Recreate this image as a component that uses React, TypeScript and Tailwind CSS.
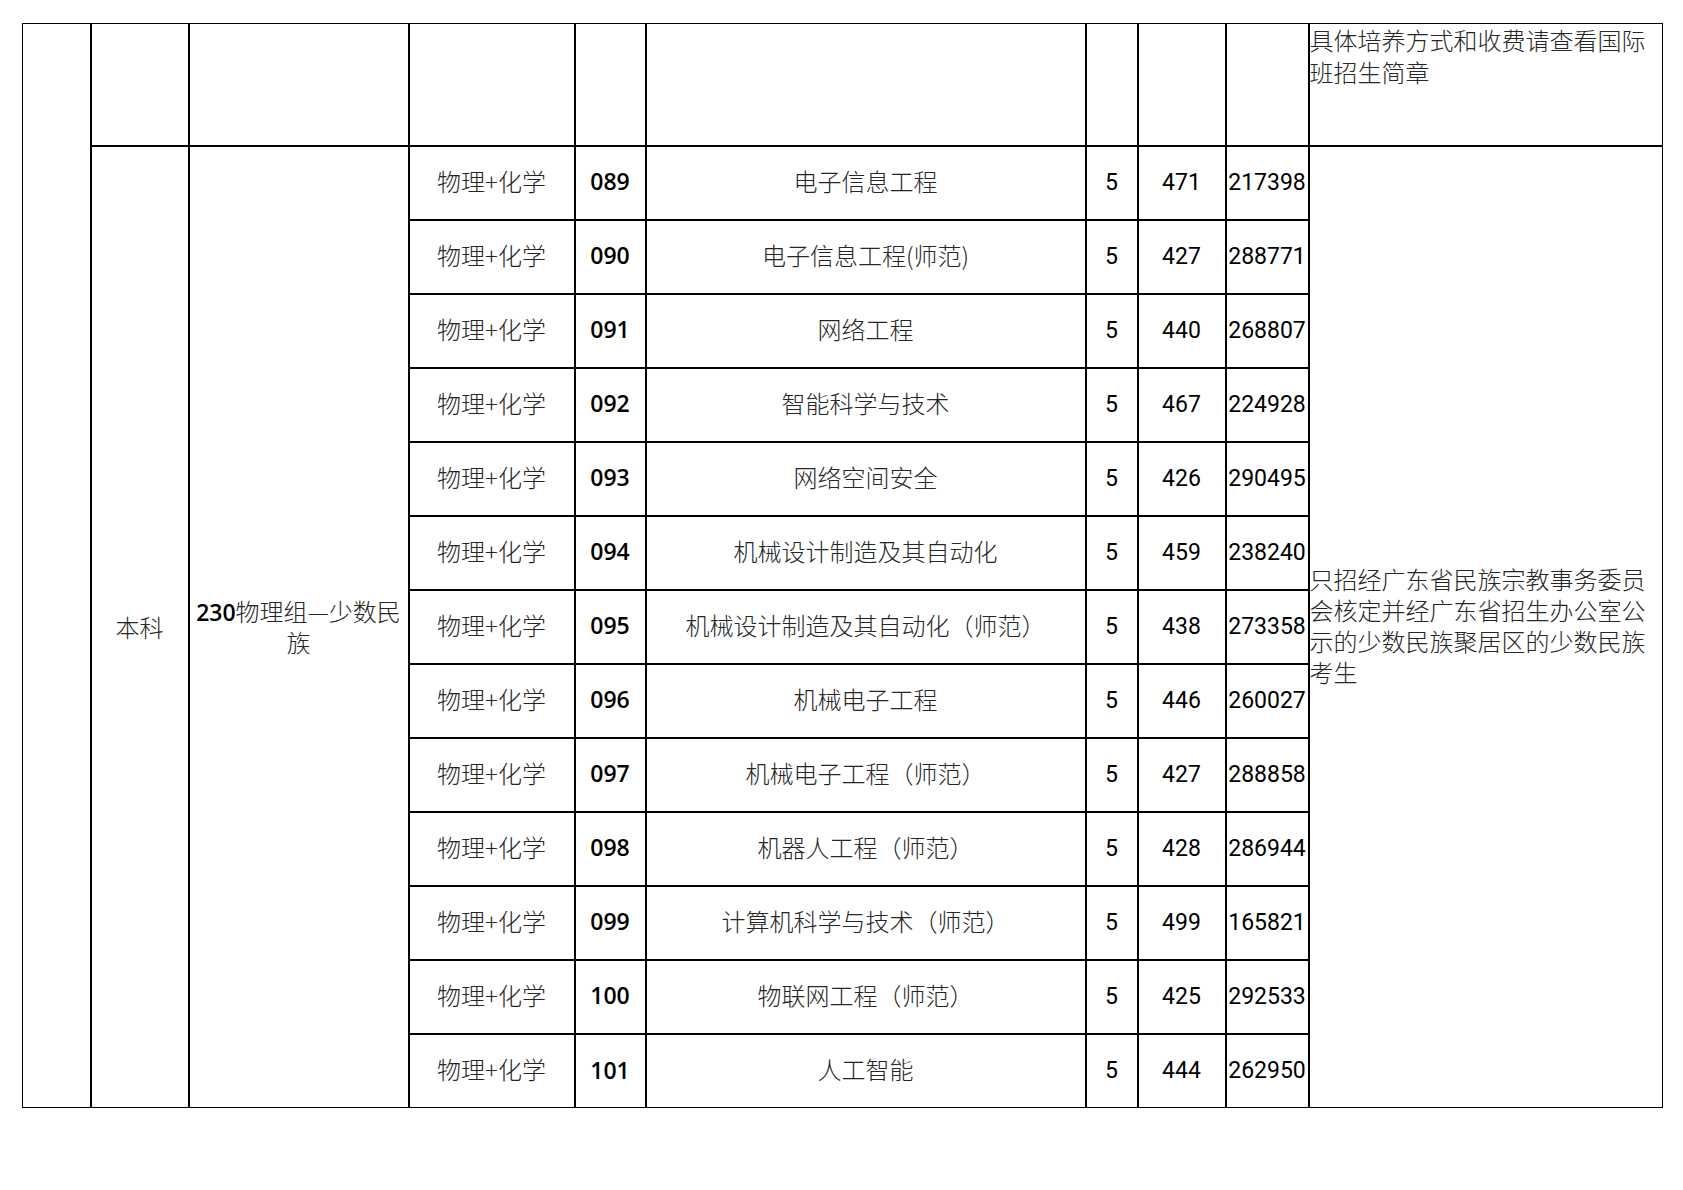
const rows = [
  ["089", "电子信息工程", "471", "217398"],
  ["090", "电子信息工程(师范)", "427", "288771"],
  ["091", "网络工程", "440", "268807"],
  ["092", "智能科学与技术", "467", "224928"],
  ["093", "网络空间安全", "426", "290495"],
  ["094", "机械设计制造及其自动化", "459", "238240"],
  ["095", "机械设计制造及其自动化（师范）", "438", "273358"],
  ["096", "机械电子工程", "446", "260027"],
  ["097", "机械电子工程（师范）", "427", "288858"],
  ["098", "机器人工程（师范）", "428", "286944"],
  ["099", "计算机科学与技术（师范）", "499", "165821"],
  ["100", "物联网工程（师范）", "425", "292533"],
  ["101", "人工智能", "444", "262950"],
];

const widths = [68, 98, 220, 166, 71, 440, 52, 88, 83, 354];

// inner rules are 2px, the outer frame is 1px
const inner = "border-black border-l-2 border-r-2 border-t-2 border-b-2";
const innerLast = "border-black border-l-2 border-r-2 border-t-2 border-b";
const headTop = "border-black border-l-2 border-r-2 border-t border-b-2";

const cjk = "text-[24px] leading-[30px] font-light text-[#262626]";
const num = "font-['Roboto'] text-[23px] text-black pt-[1px]";
const code = "font-['Open_Sans'] font-semibold text-[23px] text-black";

export default function App() {
  return (
    <div className="min-h-[1190px] bg-white pl-[22px] pt-[23px] font-['Noto_Sans_CJK_SC',sans-serif]">
      <table className="table-fixed border-collapse w-[1640px]">
        <colgroup>
          {widths.map((w, i) => (
            <col key={i} style={{ width: w }} />
          ))}
        </colgroup>
        <tbody>
          <tr className="h-[122px]">
            <td rowSpan={14} className="border-black border-l border-t border-b border-r-2"></td>
            <td className={headTop}></td>
            <td className={headTop}></td>
            <td className={headTop}></td>
            <td className={headTop}></td>
            <td className={headTop}></td>
            <td className={headTop}></td>
            <td className={headTop}></td>
            <td className={headTop}></td>
            <td className={`border-black border-l-2 border-r border-t border-b-2 align-top ${cjk} leading-[32px]`}>
              具体培养方式和收费请查看国际班招生简章
            </td>
          </tr>
          {rows.map((r, i) => {
            const last = i === rows.length - 1;
            const cell = last ? innerLast : inner;
            return (
              <tr key={r[0]} className="h-[74px]">
                {i === 0 && (
                  <>
                    <td rowSpan={13} className={`border-black border-l-2 border-r-2 border-t-2 border-b text-center ${cjk}`}>
                      本科
                    </td>
                    <td rowSpan={13} className={`border-black border-l-2 border-r-2 border-t-2 border-b text-center ${cjk}`}>
                      <span className={code}>230</span>物理组—少数民族
                    </td>
                  </>
                )}
                <td className={`${cell} text-center pb-[3px] ${cjk}`}>物理+化学</td>
                <td className={`${cell} text-center pb-[2px] ${code}`}>{r[0]}</td>
                <td className={`${cell} text-center pb-[3px] ${cjk}`}>{r[1]}</td>
                <td className={`${cell} text-center ${num}`}>5</td>
                <td className={`${cell} text-center ${num}`}>{r[2]}</td>
                <td className={`${cell} text-center whitespace-nowrap ${num}`}>{r[3]}</td>
                {i === 0 && (
                  <td rowSpan={13} className={`border-black border-l-2 border-r border-t-2 border-b align-middle pb-[3px] ${cjk} leading-[31px]`}>
                    只招经广东省民族宗教事务委员会核定并经广东省招生办公室公示的少数民族聚居区的少数民族考生
                  </td>
                )}
              </tr>
            );
          })}
        </tbody>
      </table>
    </div>
  );
}
